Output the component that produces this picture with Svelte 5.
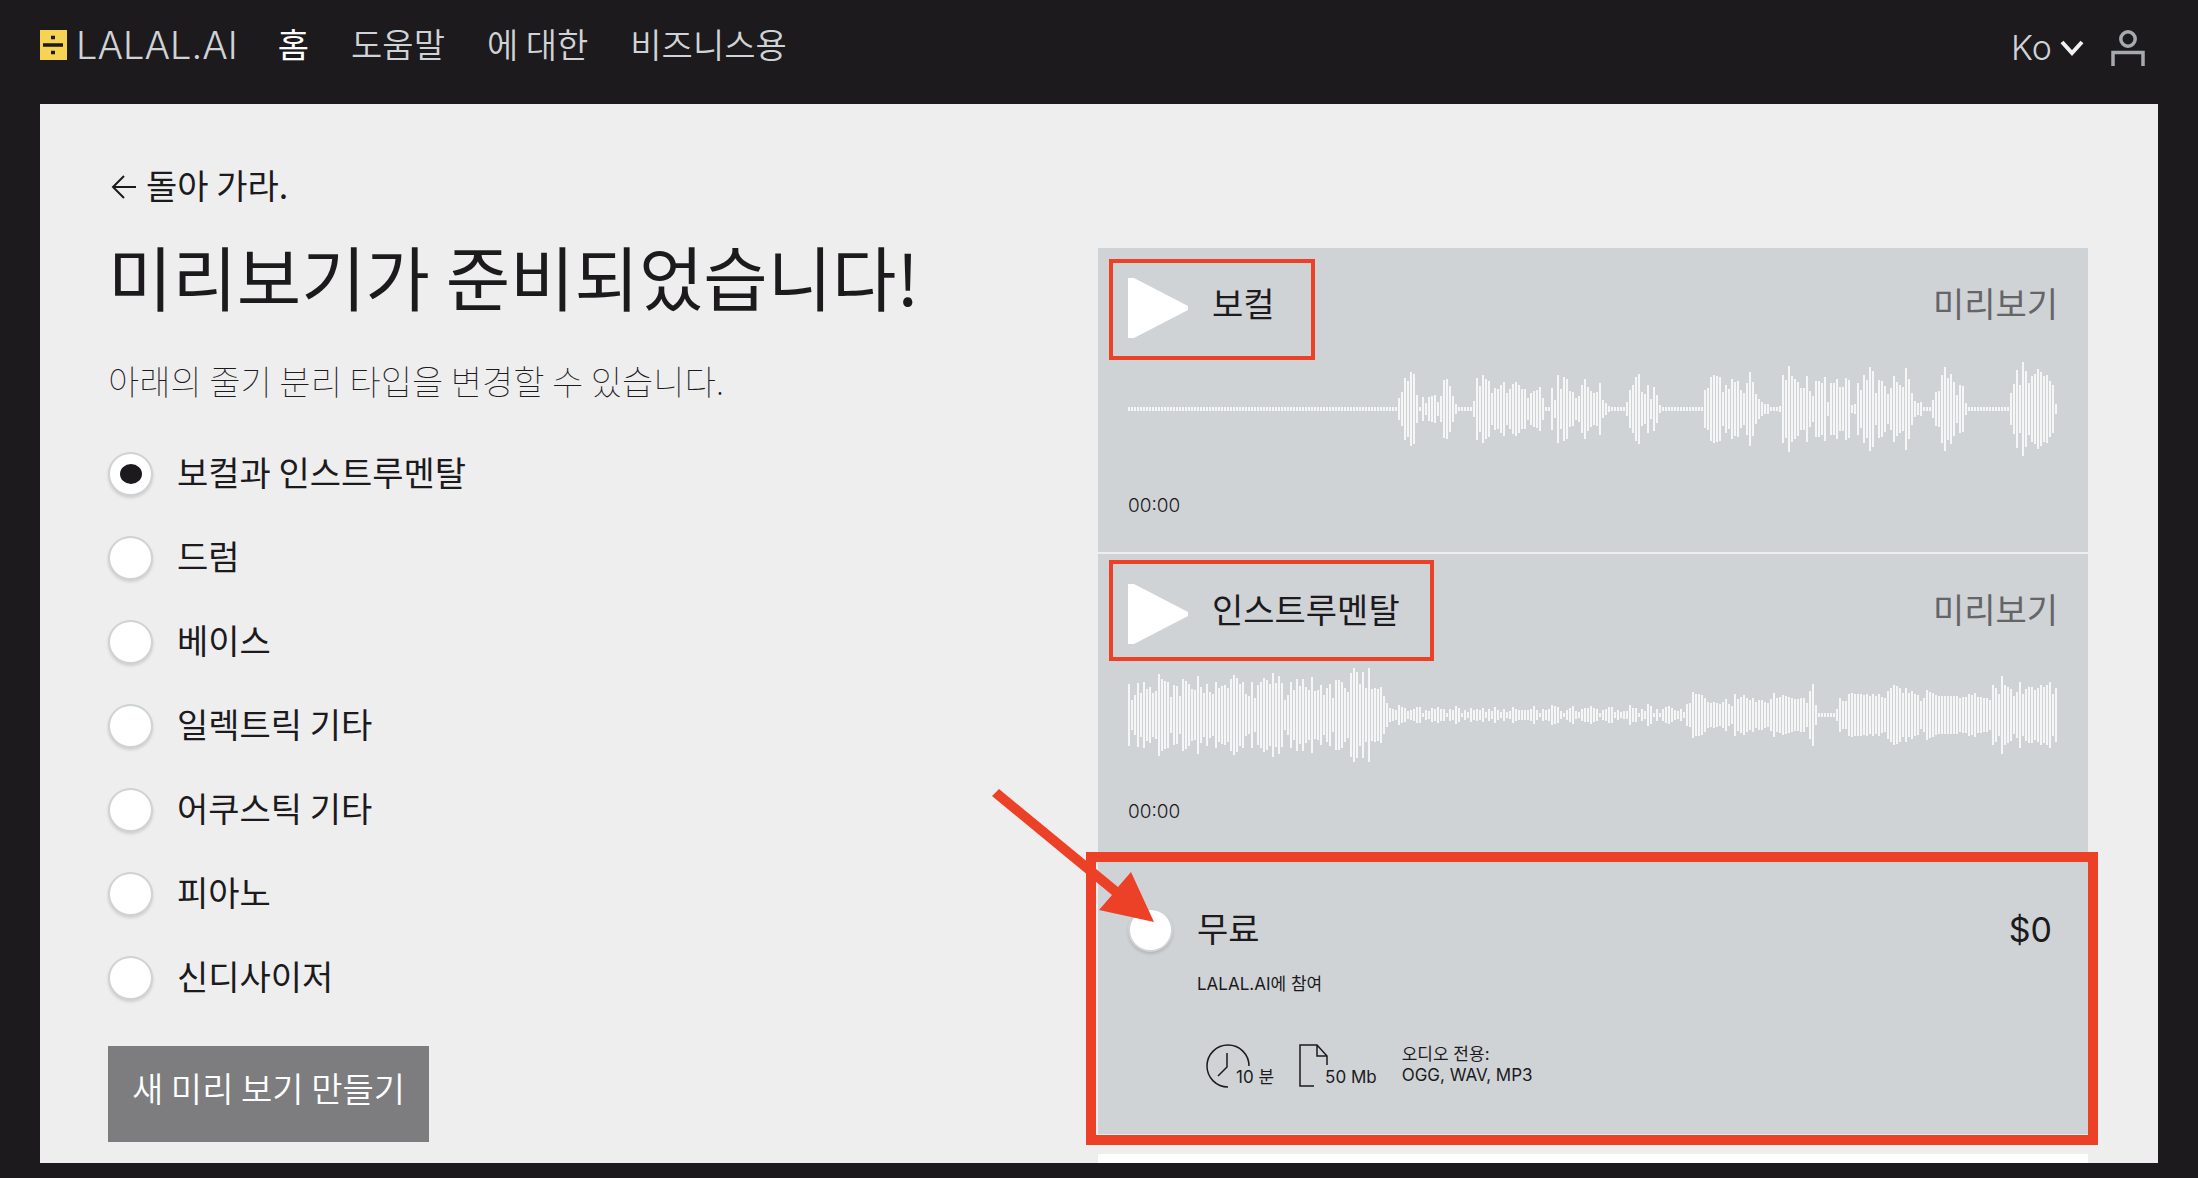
<script lang="ts">
  const navItems = [
    { label: "홈", active: true },
    { label: "도움말", active: false },
    { label: "에 대한", active: false },
    { label: "비즈니스용", active: false },
  ];

  const stems = [
    "보컬과 인스트루멘탈",
    "드럼",
    "베이스",
    "일렉트릭 기타",
    "어쿠스틱 기타",
    "피아노",
    "신디사이저",
  ];

  const flat = (count: number) => Array(count).fill(7);

  // Amplitudes, one per bar
  const vocalPeaks = [
    ...flat(90),
    33, 51, 93, 84, 111, 105, 43, 7, 36, 17, 36, 40, 43, 22, 40, 87, 90, 70, 39, 14,
    ...flat(5),
    24, 93, 70, 102, 89, 83, 49, 63, 60, 71, 81, 48, 61, 76, 81, 71, 61, 61, 33, 48, 53, 58, 66, 33,
    7, 7, 63, 28, 102, 60, 97, 90, 55, 52, 33, 40, 73, 91, 66, 55, 49, 51, 79, 28, 19, 10,
    ...flat(5),
    22, 58, 71, 96, 105, 51, 45, 72, 31, 66, 42, 13,
    ...flat(14),
    57, 63, 96, 102, 99, 96, 51, 71, 61, 90, 81, 83, 58, 49, 77, 111, 81, 46, 31, 22, 16, 15,
    ...flat(3),
    10, 102, 87, 130, 100, 91, 82, 64, 64, 100, 55, 40, 85, 85, 78, 96, 22, 78, 79, 91, 66, 65, 94, 88,
    13, 16, 77, 57, 103, 88, 127, 114, 49, 87, 85, 70, 46, 63, 99, 81, 72, 65, 124, 91, 49, 24, 19, 22,
    ...flat(3),
    26, 51, 55, 102, 126, 94, 106, 82, 42, 73, 70, 18,
    ...flat(14),
    49, 76, 118, 72, 142, 115, 78, 100, 106, 120, 112, 100, 102, 84, 72, 16,
  ];

  const instrumentalPeaks = [
    94, 45, 61, 96, 67, 99, 79, 85, 66, 73, 123, 109, 102, 99, 55, 90, 88, 56, 109, 102,
    93, 79, 75, 117, 84, 67, 93, 69, 62, 99, 81, 88, 90, 80, 109, 120, 112, 94, 99, 63,
    58, 99, 51, 90, 99, 112, 106, 93, 127, 97, 118, 96, 46, 61, 100, 76, 107, 88, 109, 85,
    76, 115, 72, 76, 91, 61, 80, 94, 52, 105, 106, 99, 81, 68, 126, 142, 130, 93, 130, 81,
    141, 79, 82, 79, 84, 57, 37, 22, 19, 16, 31, 25, 21, 11, 15, 19, 24, 25, 7, 15,
    12, 22, 19, 25, 17, 17, 7, 19, 15, 28, 21, 7, 16, 9, 21, 16, 19, 16, 22, 9,
    17, 12, 25, 16, 9, 19, 10, 13, 25, 19, 16, 14, 14, 15, 17, 28, 16, 7, 19, 15,
    17, 31, 27, 25, 13, 7, 15, 22, 28, 13, 10, 19, 22, 21, 28, 22, 19, 7, 14, 18,
    25, 25, 10, 15, 10, 12, 13, 30, 21, 21, 7, 19, 12, 34, 28, 7, 18, 7, 18, 24,
    28, 21, 16, 13, 17, 10, 33, 37, 70, 62, 62, 60, 50, 40, 36, 40, 37, 34, 39, 49,
    32, 27, 64, 49, 55, 61, 51, 44, 50, 40, 45, 44, 40, 35, 47, 67, 52, 55, 60, 58,
    53, 50, 49, 49, 51, 50, 37, 73, 92, 29,
    ...flat(6),
    18, 51, 43, 41, 63, 66, 64, 64, 64, 61, 64, 58, 62, 56, 64, 53, 52, 73, 80, 90,
    87, 81, 67, 80, 65, 71, 63, 61, 42, 52, 76, 69, 67, 61, 58, 58, 58, 58, 58, 58,
    58, 52, 55, 55, 64, 60, 66, 55, 55, 51, 52, 46, 91, 82, 62, 117, 89, 85, 79, 58,
    69, 99, 62, 79, 84, 84, 74, 80, 91, 85, 90, 99, 64, 81,
  ];

  const tracks = [
    { name: "보컬", peaks: vocalPeaks },
    { name: "인스트루멘탈", peaks: instrumentalPeaks },
  ];

  let stem = $state(stems[0]);
  let plan = $state("");

  // Three units per bar, mirrored around the middle line
  function wavePath(peaks: number[]) {
    return peaks
      .map((peak, i) => {
        const half = Math.round(peak / 3);
        return `M${i * 3 + 1} ${48 - half}v${half * 2}`;
      })
      .join("");
  }
</script>

<div class="page">
  <header class="topbar">
    <a class="logo" href="#home">
      <svg class="logo-mark" viewBox="0 0 27 30" aria-hidden="true">
        <rect width="27" height="30" fill="#f6d353" />
        <path d="M3 15h20M11 7.500h4M11 22.500h4" stroke="#1c1a1d" stroke-width="3.500" />
      </svg>
      <span>LALAL.AI</span>
    </a>
    <nav class="nav">
      {#each navItems as item}
        <a href="#{item.label}" class:active={item.active}>{item.label}</a>
      {/each}
    </nav>
    <div class="account">
      <label class="lang">
        <select aria-label="언어">
          <option>Ko</option>
        </select>
        <svg class="chevron" viewBox="0 0 24 16" aria-hidden="true">
          <path d="M2 2l10 11L22 2" fill="none" stroke="#f0f1f1" stroke-width="4" />
        </svg>
      </label>
      <button class="user" type="button" aria-label="계정">
        <svg viewBox="0 0 34 36" aria-hidden="true">
          <g fill="none" stroke="#a6aaac" stroke-width="3.500">
            <circle cx="17" cy="9" r="7.200" />
            <path d="M2 36V22.500h30V36" />
          </g>
        </svg>
      </button>
    </div>
  </header>

  <main class="panel">
    <section class="options">
      <a class="back" href="#back">
        <svg viewBox="0 0 26 24" aria-hidden="true">
          <path d="M13 1L2 12l11 11M2 12h23" fill="none" stroke="#1c1a1d" stroke-width="2" />
        </svg>
        <span>돌아 가라.</span>
      </a>
      <h1>미리보기가 준비되었습니다!</h1>
      <p class="hint">아래의 줄기 분리 타입을 변경할 수 있습니다.</p>
      <div class="stems" role="radiogroup" aria-label="줄기 분리 타입">
        {#each stems as name}
          <label class="stem">
            <input type="radio" name="stem" value={name} bind:group={stem} />
            <span>{name}</span>
          </label>
        {/each}
      </div>
      <button class="create" type="button">새 미리 보기 만들기</button>
    </section>

    <section class="results">
      {#each tracks as track}
        <article class="track">
          <div class="track-head">
            <div class="track-name">
              <button class="play" type="button" aria-label="{track.name} 재생">
                <svg viewBox="0 0 60 60" aria-hidden="true">
                  <path d="M0 0h6l54 28v4L6 60H0z" fill="#fff" />
                </svg>
              </button>
              <h2>{track.name}</h2>
            </div>
            <span class="preview">미리보기</span>
          </div>
          <svg class="wave" viewBox="0 0 930 96" preserveAspectRatio="none" aria-hidden="true">
            <path d={wavePath(track.peaks)} stroke="#f5f6f6" stroke-width="2" />
          </svg>
          <time>00:00</time>
        </article>
      {/each}

      <article class="plan">
        <div class="plan-head">
          <label class="stem">
            <input type="radio" name="plan" value="free" bind:group={plan} />
            <span>무료</span>
          </label>
          <span class="price">$0</span>
        </div>
        <p class="plan-note">LALAL.AI에 참여</p>
        <ul class="limits">
          <li>
            <svg class="clock" viewBox="0 0 44 44" aria-hidden="true">
              <path
                d="M43 22A21 21 0 1 0 22 43M21 9v14l-9 9"
                fill="none"
                stroke="#1c1a1d"
                stroke-width="1.500"
              />
            </svg>
            <span>10 분</span>
          </li>
          <li>
            <svg class="file" viewBox="0 0 30 44" aria-hidden="true">
              <path
                d="M15 42H1V1h17l10 11v9M18 1v11h10"
                fill="none"
                stroke="#1c1a1d"
                stroke-width="1.500"
              />
            </svg>
            <span>50 Mb</span>
          </li>
          <li class="formats">오디오 전용:<br />OGG, WAV, MP3</li>
        </ul>
      </article>
      <article class="plan next"></article>

      <svg class="arrow" viewBox="0 0 164 136" aria-hidden="true">
        <path d="M8 1l119 98 13-15 23 50-55-12 13-15L1 8z" fill="#ec4126" />
      </svg>
    </section>
  </main>
</div>

<style>
  :global(body) {
    background: #1c1a1d;
  }

  .page {
    display: flex;
    flex-direction: column;
    height: 100vh;
    box-sizing: border-box;
    padding-bottom: 15px;
    background: #1c1a1d;
    color: #1c1a1d;
    font-family: "Noto Sans CJK KR", sans-serif;
    font-size: 34px;
    font-weight: 400;
    line-height: 40px;
  }

  a {
    color: inherit;
    text-decoration: none;
  }

  button,
  select {
    font: inherit;
    color: inherit;
    background: none;
    border: none;
    padding: 0;
    margin: 0;
    cursor: pointer;
  }

  svg {
    display: block;
    flex-shrink: 0;
  }

  h1,
  h2,
  p,
  ul {
    margin: 0;
    padding: 0;
    font-weight: inherit;
  }

  /* Latin and numeric texts */
  .logo,
  .lang,
  time,
  .price,
  .plan-note,
  .limits {
    font-family: "Inter", "Noto Sans CJK KR", sans-serif;
  }

  /* Top bar */
  .topbar {
    display: flex;
    align-items: center;
    height: 44px;
    padding: 24px 53px 36px 40px;
    color: #cfd3d5;
    font-weight: 300;
  }

  .logo {
    display: flex;
    align-items: center;
    gap: 9px;
    padding-bottom: 2px;
    font-size: 38px;
  }

  .logo-mark {
    width: 27px;
    height: 30px;
  }

  .nav {
    display: flex;
    gap: 42px;
    margin-left: 40px;
    padding-bottom: 4px;
    font-weight: 350;
  }

  .nav .active {
    color: #fff;
    font-weight: 400;
  }

  .account {
    display: flex;
    align-items: center;
    gap: 27px;
    margin-left: auto;
    padding-top: 4px;
  }

  .lang {
    display: flex;
    align-items: center;
    gap: 8px;
  }

  .lang select {
    appearance: none;
  }

  .chevron {
    width: 24px;
    height: 16px;
  }

  .user svg {
    width: 34px;
    height: 36px;
  }

  /* Panel */
  .panel {
    flex: 1;
    min-height: 0;
    display: grid;
    grid-template-columns: 1fr 1fr;
    margin: 0 40px;
    padding: 0 70px 0 68px;
    background: #eee;
    overflow: hidden;
  }

  .options {
    display: flex;
    flex-direction: column;
    align-items: flex-start;
    padding-top: 61px;
  }

  .back {
    display: flex;
    align-items: center;
    gap: 9px;
    padding-left: 3px;
  }

  .back svg {
    width: 26px;
    height: 24px;
    margin-top: 4px;
  }

  h1 {
    margin-top: 31px;
    font-size: 70px;
    line-height: 80px;
    white-space: nowrap;
  }

  .hint {
    margin-top: 45px;
    font-weight: 100;
  }

  .stems {
    display: flex;
    flex-direction: column;
    gap: 40px;
    margin-top: 51px;
  }

  .stem {
    display: flex;
    align-items: center;
    gap: 24px;
    height: 44px;
    cursor: pointer;
  }

  .stem span {
    padding-bottom: 5px;
  }

  .stem input {
    appearance: none;
    display: grid;
    place-items: center;
    box-sizing: border-box;
    width: 45px;
    height: 44px;
    margin: 0;
    border: 2px solid #cfd3d6;
    border-radius: 50%;
    background: #fff;
    box-shadow: 0 2px 3px rgba(28, 26, 29, 0.15);
    cursor: pointer;
  }

  .stem input:checked::before {
    content: "";
    width: 22px;
    height: 20px;
    border-radius: 50%;
    background: #1c1a1d;
  }

  .create {
    height: 96px;
    margin-top: 46px;
    padding: 0 24px 13px;
    background: #7d7d7f;
    color: #fff;
    font-weight: 350;
  }

  /* Results */
  .results {
    position: relative;
    display: flex;
    flex-direction: column;
    gap: 2px;
    padding-top: 144px;
  }

  .track,
  .plan {
    box-sizing: border-box;
    flex-shrink: 0;
    padding: 30px;
    background: #cfd3d6;
  }

  .track {
    height: 304px;
  }

  .track-head,
  .plan-head {
    display: flex;
    justify-content: space-between;
  }

  .track-head {
    height: 60px;
  }

  .track-name {
    position: relative;
    display: flex;
    gap: 24px;
  }

  /* Highlight frame around the play button and name */
  .track-name::after {
    content: "";
    position: absolute;
    inset: -19px -40px -22px -19px;
    border: 4px solid #ec4126;
    pointer-events: none;
  }

  .track + .track .track-name::after {
    inset: -24px -34px -17px -19px;
  }

  .play svg {
    width: 60px;
    height: 60px;
  }

  h2,
  .preview {
    padding-top: 5px;
    font-size: 34px;
  }

  .preview {
    color: #656568;
  }

  .wave {
    width: 100%;
    height: 96px;
    margin-top: 23px;
  }

  time {
    display: block;
    margin-top: 37px;
    font-size: 19px;
    font-weight: 300;
    line-height: 24px;
  }

  .plan {
    position: relative;
    height: 274px;
    padding-top: 48px;
  }

  /* Highlight frame around the free plan */
  .plan::after {
    content: "";
    position: absolute;
    inset: -8px -10px -11px -12px;
    border: 10px solid #ec4126;
    pointer-events: none;
  }

  .price {
    padding-right: 6px;
    line-height: 44px;
  }

  .plan-note {
    margin-top: 20px;
    padding-left: 69px;
    font-size: 17px;
    font-weight: 400;
    line-height: 24px;
  }

  .limits {
    display: flex;
    align-items: flex-start;
    gap: 25px;
    margin-top: 48px;
    padding-left: 78px;
    list-style: none;
    font-size: 17px;
    font-weight: 400;
    line-height: 21px;
  }

  .limits li {
    display: flex;
    align-items: flex-end;
  }

  .clock {
    width: 44px;
    height: 44px;
    margin-right: -14px;
  }

  .file {
    width: 30px;
    height: 44px;
    margin-right: -4px;
  }

  .limits .formats {
    display: block;
  }

  .plan.next {
    height: 120px;
    margin-top: 18px;
    background: #fff;
  }

  .plan.next::after {
    content: none;
  }

  .arrow {
    position: absolute;
    top: 684px;
    left: -107px;
    width: 164px;
    height: 136px;
    pointer-events: none;
  }
</style>
